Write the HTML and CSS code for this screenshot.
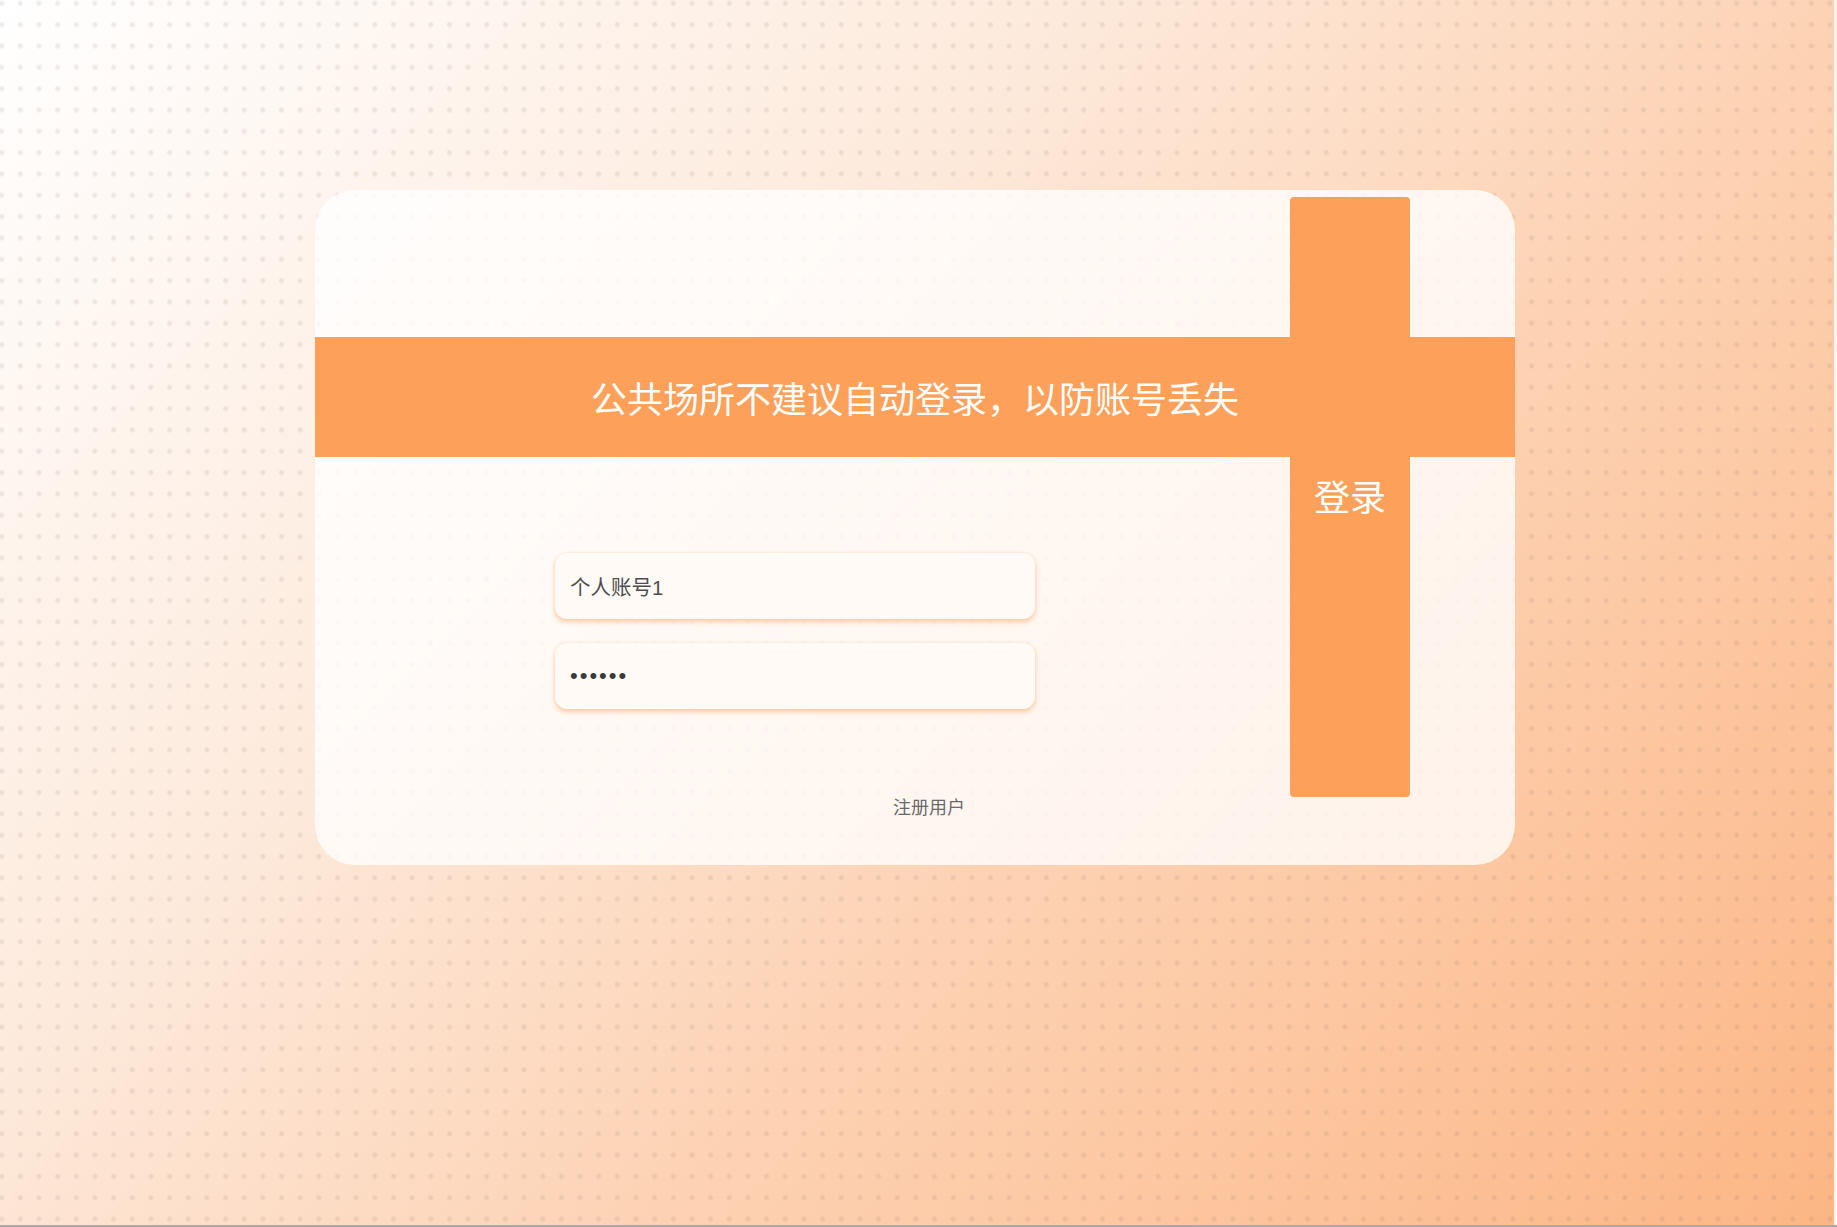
FILE: index.html
```html
<!DOCTYPE html>
<html lang="zh-CN">
<head>
<meta charset="utf-8">
<title>登录</title>
<link rel="stylesheet" href="styles.css">
</head>
<body>
<div class="frame">
  <div class="page">
    <div class="card">
      <div class="banner">公共场所不建议自动登录，以防账号丢失</div>
      <button class="login-btn" type="button">登录</button>
      <form class="form">
        <input class="field" type="text" value="个人账号1">
        <input class="field" type="password" value="123456">
        <a class="register" href="#">注册用户</a>
      </form>
    </div>
  </div>
</div>
</body>
</html>
```

FILE: styles.css
```css
html, body {
  margin: 0;
  padding: 0;
  background: #a9a9a9;
}

.frame {
  height: 1225px;
  background: #fcf4ef;
}

.page {
  width: 1834px;
  height: 1225px;
  background-color: #fde0cb;
  background-image:
    radial-gradient(circle at center, rgba(120, 96, 92, 0.12) 0, rgba(120, 96, 92, 0.12) 1.8px, rgba(120, 96, 92, 0) 3.2px),
    linear-gradient(135deg, #ffffff 0%, #fdeadc 35%, #fdd3b5 60%, #fcb685 100%);
  background-size: 18.67px 21.33px, 100% 100%;
  background-position: -7.67px -7.33px, 0 0;
  background-repeat: repeat, no-repeat;
  display: flex;
  justify-content: center;
  align-items: flex-start;
  padding-top: 190px;
  padding-right: 4px;
  box-sizing: border-box;
  font-family: "Liberation Sans", "Noto Sans CJK SC", sans-serif;
}

.card {
  width: 1200px;
  height: 675px;
  border-radius: 40px;
  background: rgba(255, 255, 255, 0.78);
  overflow: hidden;
  display: grid;
  grid-template-columns: 975px 120px 105px;
  grid-template-rows: 7px 140px 120px 340px 68px;
}

.banner {
  grid-column: 1 / -1;
  grid-row: 3;
  background: #fda15a;
  color: #ffffff;
  font-family: "Noto Sans CJK SC", sans-serif;
  font-size: 36px;
  line-height: 120px;
  text-align: center;
}

.login-btn {
  grid-column: 2;
  grid-row: 2 / 5;
  z-index: 1;
  border: none;
  margin: 0;
  border-radius: 4px;
  background: #fda15a;
  color: #ffffff;
  font-family: "Noto Sans CJK SC", sans-serif;
  font-size: 36px;
  line-height: 46px;
  padding: 275px 0 0;
  display: flex;
  justify-content: center;
  align-items: flex-start;
  cursor: pointer;
}

.form {
  grid-column: 1;
  grid-row: 4 / 6;
  margin: 0;
  padding: 96px 0 0 240px;
  display: flex;
  flex-direction: column;
  align-items: flex-start;
  gap: 24px;
}

.field {
  width: 480px;
  height: 66px;
  box-sizing: border-box;
  border: none;
  outline: none;
  border-radius: 12px;
  padding: 0 15px;
  background: #fffaf6;
  box-shadow: 0 3px 5px rgba(250, 150, 80, 0.45), 0 0 3px rgba(250, 170, 110, 0.25);
  font-family: "Liberation Sans", "Noto Sans CJK SC", sans-serif;
  font-size: 20.5px;
  color: #4d4d4d;
}

.field[type="password"] {
  color: #3a3a3a;
  font-size: 22px;
  letter-spacing: 2px;
}

.register {
  margin-top: 60px;
  margin-left: 338px;
  font-family: "Noto Sans CJK SC", sans-serif;
  font-size: 18px;
  line-height: 26px;
  color: #6a6a6a;
  text-decoration: none;
}
```
